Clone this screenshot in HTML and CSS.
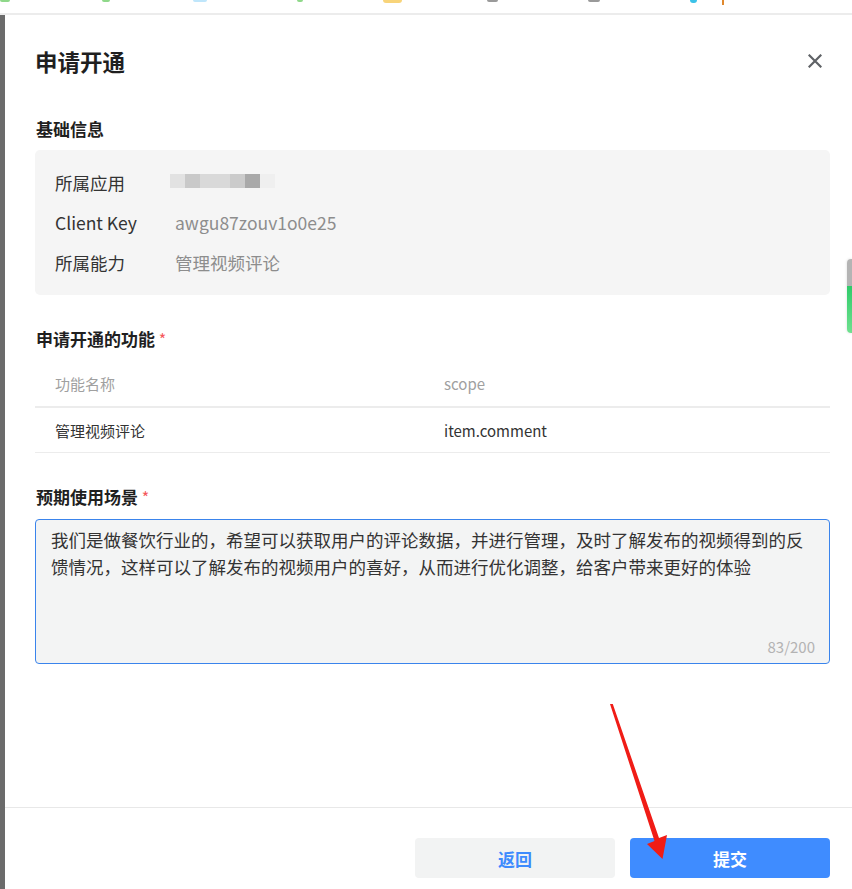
FILE: index.html
```html
<!DOCTYPE html>
<html lang="zh-CN">
<head>
    <meta charset="UTF-8">
    <meta name="viewport" content="width=device-width, initial-scale=1.0">
    <title>申请开通</title>
    <link rel="stylesheet" href="styles.css">
</head>
<body>
    <div class="topbar">
        <span class="tb tb1"></span>
        <span class="tb tb2"></span>
        <span class="tb tb3"></span>
        <span class="tb tb4"></span>
        <span class="tb tb5"></span>
        <span class="tb tb6"></span>
        <span class="tb tb7"></span>
        <span class="tb tb8"></span>
        <span class="tb tb9"></span>
    </div>

    <div class="page">
        <div class="side-strip"></div>

        <div class="drawer">
            <div class="drawer-body">
                <div class="drawer-header">
                    <h1 class="title">申请开通</h1>
                    <button class="close" aria-label="关闭">
                        <svg width="14" height="14" viewBox="0 0 14 14">
                            <path d="M1.5 1.5 L12.5 12.5 M12.5 1.5 L1.5 12.5" stroke="#5f6266" stroke-width="2.2" stroke-linecap="square"/>
                        </svg>
                    </button>
                </div>

                <h2 class="section-title first">基础信息</h2>
                <div class="info-box">
                    <div class="info-row">
                        <span class="info-label">所属应用</span>
                        <span class="mosaic">
                            <i class="m m1"></i><i class="m m2"></i><i class="m m3"></i><i class="m m4"></i><i class="m m5"></i><i class="m m6"></i>
                        </span>
                    </div>
                    <div class="info-row">
                        <span class="info-label">Client Key</span>
                        <span class="info-value">awgu87zouv1o0e25</span>
                    </div>
                    <div class="info-row">
                        <span class="info-label">所属能力</span>
                        <span class="info-value">管理视频评论</span>
                    </div>
                </div>

                <h2 class="section-title">申请开通的功能 <span class="req">*</span></h2>
                <div class="table">
                    <div class="t-row t-head">
                        <div class="t-cell">功能名称</div>
                        <div class="t-cell">scope</div>
                    </div>
                    <div class="t-row t-body">
                        <div class="t-cell">管理视频评论</div>
                        <div class="t-cell">item.comment</div>
                    </div>
                </div>

                <h2 class="section-title">预期使用场景 <span class="req">*</span></h2>
                <div class="textarea">
                    <p class="textarea-text">我们是做餐饮行业的，希望可以获取用户的评论数据，并进行管理，及时了解发布的视频得到的反馈情况，这样可以了解发布的视频用户的喜好，从而进行优化调整，给客户带来更好的体验</p>
                    <div class="counter">83/200</div>
                </div>
            </div>

            <div class="drawer-footer">
                <button class="btn btn-back">返回</button>
                <button class="btn btn-submit">提交</button>
            </div>
        </div>
    </div>

    <div class="scroll-tab"></div>

    <svg class="arrow" width="852" height="889" viewBox="0 0 852 889">
        <polygon points="610,704 612.8,704 659,838 667,835 662.5,859 647,844 654.5,841" fill="#f01c16"/>
    </svg>
</body>
</html>
```

FILE: styles.css
```css
* {
    box-sizing: border-box;
}
html, body {
    height: 100%;
}
body {
    margin: 0;
    padding: 0;
    font-family: "Noto Sans CJK SC", "Noto Sans", sans-serif;
    color: #222;
    background: #fff;
    overflow: hidden;
    position: relative;
}
.topbar {
    height: 15px;
    border-bottom: 2px solid #ececec;
    display: flex;
    align-items: flex-start;
}
.tb {
    display: block;
    height: 2px;
    border-radius: 0 0 3px 3px;
}
.tb1 { width: 10px; margin-left: 0; background: #8fd88a; }
.tb2 { width: 8px; margin-left: 92px; background: #8fd88a; }
.tb3 { width: 14px; margin-left: 83px; background: #bfe6fb; }
.tb4 { width: 6px; margin-left: 90px; background: #8fd88a; }
.tb5 { width: 19px; margin-left: 80px; background: #f8d47a; height: 3px; }
.tb6 { width: 11px; margin-left: 85px; background: #9a9a9a; }
.tb7 { width: 12px; margin-left: 90px; background: #9a9a9a; }
.tb8 { width: 7px; margin-left: 90px; background: #3cc2e8; height: 3px; }
.tb9 { width: 2px; margin-left: 25px; background: #e0892e; height: 5px; border-radius: 0; }
.page {
    display: flex;
    height: calc(100% - 15px);
}
.side-strip {
    width: 5px;
    background: #6b6b6b;
    flex-shrink: 0;
}
.drawer {
    flex: 1;
    display: flex;
    flex-direction: column;
    background: #fff;
}
.drawer-body {
    flex: 1;
    padding: 31px 22px 0 30px;
    border-bottom: 1px solid #e8e8e8;
}
.drawer-header {
    display: flex;
    justify-content: space-between;
    align-items: center;
    height: 30px;
}
.title {
    margin: 0;
    font-size: 22.5px;
    line-height: 30px;
    font-weight: 700;
    color: #1f1f1f;
}
.close {
    border: none;
    background: none;
    padding: 0;
    margin-right: 8px;
    width: 14px;
    height: 14px;
    cursor: pointer;
    display: flex;
}
.section-title {
    margin: 32px 0 0 1px;
    font-size: 17px;
    line-height: 24px;
    font-weight: 700;
    color: #1f1f1f;
}
.section-title.first {
    margin-top: 41px;
}
.req {
    color: #f5595a;
    font-weight: 400;
    font-size: 16px;
}
.info-box {
    margin-top: 9px;
    background: #f5f5f5;
    border-radius: 5px;
    padding: 12px 20px 13px;
}
.info-row {
    display: flex;
    align-items: center;
    height: 40px;
    font-size: 17.5px;
}
.info-label {
    width: 120px;
    color: #333;
}
.info-value {
    color: #8d8d8d;
}
.mosaic {
    display: flex;
    margin-left: -5px;
    margin-top: -3px;
    height: 14px;
}
.m {
    display: block;
    width: 15px;
    height: 14px;
}
.m1 { background: #e2e2e2; }
.m2 { background: #c9c9c9; }
.m3 { background: #d9d9d9; width: 30px; }
.m4 { background: #cbcbcb; }
.m5 { background: #a9a9a9; }
.m6 { background: #efefef; }
.table {
    margin-top: 9px;
    font-size: 15px;
}
.t-row {
    display: grid;
    grid-template-columns: 389px 1fr;
    align-items: center;
}
.t-cell {
    padding-left: 20px;
}
.t-head {
    height: 48px;
    color: #a0a0a0;
    border-bottom: 2px solid #ececec;
}
.t-body {
    height: 45px;
    color: #333;
    border-bottom: 1px solid #ececec;
}
.textarea {
    margin-top: 10px;
    height: 145px;
    border: 1px solid #3a84ec;
    border-radius: 4px;
    background: #f3f4f4;
    padding: 6px 14px 6px 15px;
    display: flex;
    flex-direction: column;
}
.textarea-text {
    margin: 0;
    font-size: 17.5px;
    line-height: 27px;
    color: #333;
}
.counter {
    margin-top: auto;
    text-align: right;
    font-size: 15px;
    line-height: 20px;
    color: #b3b3b3;
}
.drawer-footer {
    height: 81px;
    display: flex;
    justify-content: flex-end;
    align-items: flex-start;
    gap: 15px;
    padding: 30px 22px 0 0;
}
.btn {
    width: 200px;
    height: 40px;
    border: none;
    border-radius: 4px;
    font-family: inherit;
    font-size: 17px;
    font-weight: 700;
    cursor: pointer;
}
.btn-back {
    background: #f2f3f3;
    color: #3e8bfd;
}
.btn-submit {
    background: #3f8cff;
    color: #fff;
}
.scroll-tab {
    position: absolute;
    right: 0;
    top: 259px;
    width: 5px;
    height: 74px;
    border-radius: 4px 0 0 4px;
    background: linear-gradient(#b4b4b4 0, #b4b4b4 27px, #2fcb6a 27px, #6fe08f 74px);
    box-shadow: 0 0 3px rgba(0,0,0,0.15);
}
.arrow {
    position: absolute;
    left: 0;
    top: 0;
    pointer-events: none;
}
```
